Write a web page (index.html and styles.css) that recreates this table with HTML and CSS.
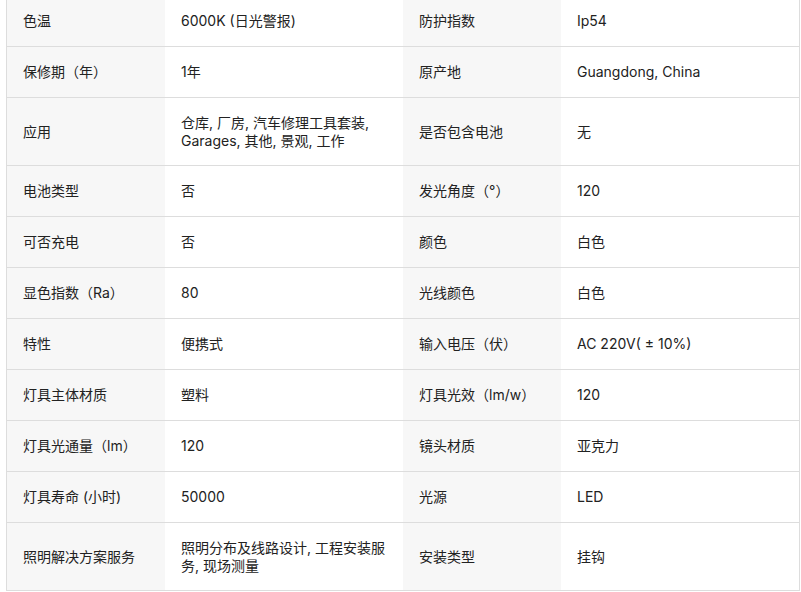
FILE: index.html
```html
<!DOCTYPE html>
<html lang="zh">
<head>
<meta charset="utf-8">
<title>产品属性</title>
<link rel="stylesheet" href="styles.css">
</head>
<body>
<div class="specs">
  <div class="k">色温</div><div class="v">6000K (日光警报)</div><div class="k">防护指数</div><div class="v">Ip54</div>
  <div class="k">保修期（年）</div><div class="v">1年</div><div class="k">原产地</div><div class="v">Guangdong, China</div>
  <div class="k">应用</div><div class="v">仓库, 厂房, 汽车修理工具套装, Garages, 其他, 景观, 工作</div><div class="k">是否包含电池</div><div class="v">无</div>
  <div class="k">电池类型</div><div class="v">否</div><div class="k">发光角度（°）</div><div class="v">120</div>
  <div class="k">可否充电</div><div class="v">否</div><div class="k">颜色</div><div class="v">白色</div>
  <div class="k">显色指数（Ra）</div><div class="v">80</div><div class="k">光线颜色</div><div class="v">白色</div>
  <div class="k">特性</div><div class="v">便携式</div><div class="k">输入电压（伏）</div><div class="v">AC 220V( ± 10%)</div>
  <div class="k">灯具主体材质</div><div class="v">塑料</div><div class="k">灯具光效（lm/w）</div><div class="v">120</div>
  <div class="k">灯具光通量（lm）</div><div class="v">120</div><div class="k">镜头材质</div><div class="v">亚克力</div>
  <div class="k">灯具寿命 (小时)</div><div class="v">50000</div><div class="k">光源</div><div class="v">LED</div>
  <div class="k">照明解决方案服务</div><div class="v">照明分布及线路设计, 工程安装服务, 现场测量</div><div class="k">安装类型</div><div class="v">挂钩</div>
</div>
</body>
</html>
```
FILE: styles.css
```css
html, body {
  margin: 0;
  padding: 0;
  background: #ffffff;
  overflow: hidden;
}
body {
  font-family: Inter, "Noto Sans CJK SC", sans-serif;
  font-size: 14px;
  color: #222222;
}
.specs {
  display: grid;
  grid-template-columns: 158px 238px 158px 238px;
  width: 792px;
  margin: -4px 0 0 6px;
  border-left: 1px solid #dddddd;
  border-right: 1px solid #dddddd;
}
.k, .v {
  display: flex;
  align-items: center;
  box-sizing: border-box;
  min-height: 51px;
  padding: 15.5px 16px;
  line-height: 18px;
  border-bottom: 1px solid #dddddd;
}
.k {
  background: #f7f7f7;
}
.v {
  background: #ffffff;
}
```
